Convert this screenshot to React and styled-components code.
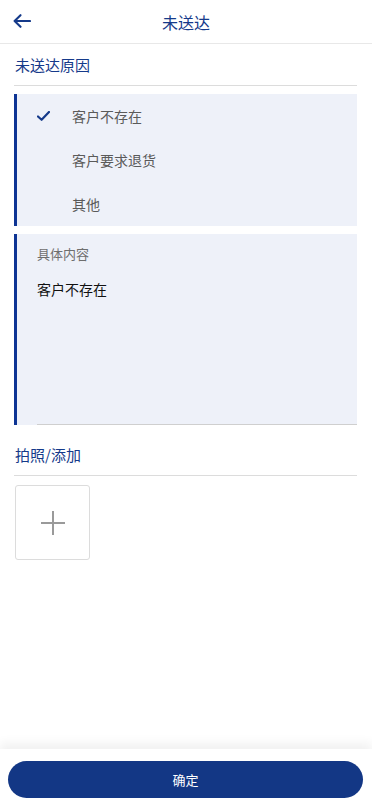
import React from "react";
import styled, { createGlobalStyle } from "styled-components";

const blue = "#153a8a";

const GlobalStyle = createGlobalStyle`
  html, body {
    margin: 0;
    padding: 0;
    background: #fff;
    font-family: "Noto Sans CJK SC", "Noto Sans", sans-serif;
  }
  * { box-sizing: border-box; }
`;

const Page = styled.div`
  min-height: 811px;
  display: flex;
  flex-direction: column;
  background: #fff;
`;

const Header = styled.header`
  height: 44px;
  display: flex;
  align-items: center;
  justify-content: center;
  position: relative;
  border-bottom: 1px solid #e8e8e8;
`;

const BackButton = styled.button`
  position: absolute;
  left: 10px;
  top: 9px;
  width: 24px;
  height: 24px;
  padding: 0;
  border: none;
  background: none;
  display: flex;
  align-items: center;
  justify-content: center;
`;

const Title = styled.h1`
  margin: 0;
  font-size: 16px;
  font-weight: 400;
  color: ${blue};
`;

const Content = styled.main`
  flex: 1;
  padding: 0 15px 0 14px;
`;

const SectionTitle = styled.div`
  height: 42px;
  display: flex;
  align-items: center;
  padding-left: 1px;
  font-size: 15px;
  color: ${blue};
  border-bottom: 1px solid #dcdcdc;
  margin-top: ${(p) => p.$top || 0}px;
`;

const Panel = styled.div`
  background: #eef1f9;
  border-left: 3px solid #0d3494;
  margin-top: ${(p) => p.$top}px;
`;

const OptionList = styled.ul`
  list-style: none;
  margin: 0;
  padding: 0;
`;

const OptionRow = styled.li`
  height: 44px;
  display: flex;
  align-items: center;
  font-size: 14px;
  color: #5a5a5a;
`;

const CheckSlot = styled.span`
  width: 55px;
  padding-left: 20px;
  display: flex;
  align-items: center;
`;

const Field = styled.div`
  height: 191px;
  padding: 11px 0 0 20px;
  display: flex;
  flex-direction: column;
`;

const FieldLabel = styled.div`
  font-size: 13px;
  color: #6e6e6e;
  line-height: 18px;
`;

const FieldValue = styled.div`
  flex: 1;
  margin-top: 16px;
  font-size: 14px;
  line-height: 20px;
  color: #111;
  border-bottom: 1px solid #cfcfcf;
`;

const Uploads = styled.div`
  padding: 9px 0 0 1px;
  display: flex;
  gap: 10px;
`;

const AddTile = styled.button`
  width: 75px;
  height: 75px;
  border: 1px solid #dcdcdc;
  border-radius: 3px;
  background: #fff;
  display: flex;
  align-items: center;
  justify-content: center;
  padding: 0;
`;

const Footer = styled.footer`
  height: 62px;
  background: #fff;
  box-shadow: 0 -6px 10px rgba(0, 0, 0, 0.06);
  display: flex;
  align-items: flex-start;
  padding: 12px 9px 0 8px;
`;

const ConfirmButton = styled.button`
  width: 100%;
  height: 37px;
  border: none;
  border-radius: 19px;
  background: #133785;
  color: #fff;
  font-family: inherit;
  font-size: 13px;
`;

const reasons = ["客户不存在", "客户要求退货", "其他"];

export default function App() {
  const selected = 0;
  return (
    <>
      <GlobalStyle />
      <Page>
        <Header>
          <BackButton aria-label="返回">
            <svg width="18" height="14" viewBox="0 0 18 14" fill="none">
              <path
                d="M17 7H2M7.5 1.2L1.6 7l5.9 5.8"
                stroke={blue}
                strokeWidth="2.1"
                strokeLinecap="round"
                strokeLinejoin="round"
              />
            </svg>
          </BackButton>
          <Title>未送达</Title>
        </Header>
        <Content>
          <SectionTitle>未送达原因</SectionTitle>
          <Panel $top={8}>
            <OptionList>
              {reasons.map((r, i) => (
                <OptionRow key={r}>
                  <CheckSlot>
                    {i === selected && (
                      <svg width="13" height="10" viewBox="0 0 13 10">
                        <path
                          d="M1 5.5l3.6 3.3L12 1"
                          fill="none"
                          stroke={blue}
                          strokeWidth="2.2"
                          strokeLinecap="round"
                          strokeLinejoin="round"
                        />
                      </svg>
                    )}
                  </CheckSlot>
                  {r}
                </OptionRow>
              ))}
            </OptionList>
          </Panel>
          <Panel $top={8}>
            <Field>
              <FieldLabel>具体内容</FieldLabel>
              <FieldValue>客户不存在</FieldValue>
            </Field>
          </Panel>
          <SectionTitle $top={9}>拍照/添加</SectionTitle>
          <Uploads>
            <AddTile aria-label="添加">
              <svg width="26" height="26" viewBox="0 0 26 26">
                <path d="M13 1v24M1 13h24" stroke="#9a9a9a" strokeWidth="2" />
              </svg>
            </AddTile>
          </Uploads>
        </Content>
        <Footer>
          <ConfirmButton>确定</ConfirmButton>
        </Footer>
      </Page>
    </>
  );
}
